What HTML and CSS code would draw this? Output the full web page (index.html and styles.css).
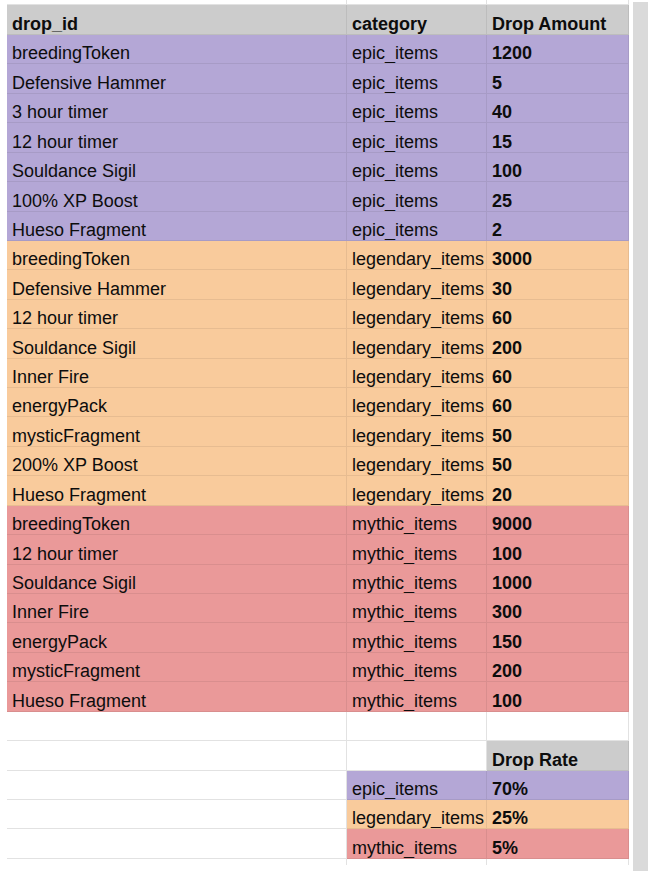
FILE: index.html
```html
<!DOCTYPE html>
<html>
<head>
<meta charset="utf-8">
<link rel="stylesheet" href="styles.css">
</head>
<body>
<div class="page">
  <div class="sheet">
    <div class="row stub"><div class="c"></div><div class="c"></div><div class="c"></div></div>
    <div class="row head"><div class="c">drop_id</div><div class="c">category</div><div class="c">Drop Amount</div></div>

    <div class="row epic"><div class="c">breedingToken</div><div class="c">epic_items</div><div class="c b">1200</div></div>
    <div class="row epic"><div class="c">Defensive Hammer</div><div class="c">epic_items</div><div class="c b">5</div></div>
    <div class="row epic"><div class="c">3 hour timer</div><div class="c">epic_items</div><div class="c b">40</div></div>
    <div class="row epic"><div class="c">12 hour timer</div><div class="c">epic_items</div><div class="c b">15</div></div>
    <div class="row epic"><div class="c">Souldance Sigil</div><div class="c">epic_items</div><div class="c b">100</div></div>
    <div class="row epic"><div class="c">100% XP Boost</div><div class="c">epic_items</div><div class="c b">25</div></div>
    <div class="row epic"><div class="c">Hueso Fragment</div><div class="c">epic_items</div><div class="c b">2</div></div>

    <div class="row leg"><div class="c">breedingToken</div><div class="c">legendary_items</div><div class="c b">3000</div></div>
    <div class="row leg"><div class="c">Defensive Hammer</div><div class="c">legendary_items</div><div class="c b">30</div></div>
    <div class="row leg"><div class="c">12 hour timer</div><div class="c">legendary_items</div><div class="c b">60</div></div>
    <div class="row leg"><div class="c">Souldance Sigil</div><div class="c">legendary_items</div><div class="c b">200</div></div>
    <div class="row leg"><div class="c">Inner Fire</div><div class="c">legendary_items</div><div class="c b">60</div></div>
    <div class="row leg"><div class="c">energyPack</div><div class="c">legendary_items</div><div class="c b">60</div></div>
    <div class="row leg"><div class="c">mysticFragment</div><div class="c">legendary_items</div><div class="c b">50</div></div>
    <div class="row leg"><div class="c">200% XP Boost</div><div class="c">legendary_items</div><div class="c b">50</div></div>
    <div class="row leg"><div class="c">Hueso Fragment</div><div class="c">legendary_items</div><div class="c b">20</div></div>

    <div class="row myth"><div class="c">breedingToken</div><div class="c">mythic_items</div><div class="c b">9000</div></div>
    <div class="row myth"><div class="c">12 hour timer</div><div class="c">mythic_items</div><div class="c b">100</div></div>
    <div class="row myth"><div class="c">Souldance Sigil</div><div class="c">mythic_items</div><div class="c b">1000</div></div>
    <div class="row myth"><div class="c">Inner Fire</div><div class="c">mythic_items</div><div class="c b">300</div></div>
    <div class="row myth"><div class="c">energyPack</div><div class="c">mythic_items</div><div class="c b">150</div></div>
    <div class="row myth"><div class="c">mysticFragment</div><div class="c">mythic_items</div><div class="c b">200</div></div>
    <div class="row myth"><div class="c">Hueso Fragment</div><div class="c">mythic_items</div><div class="c b">100</div></div>

    <div class="row blank"><div class="c"></div><div class="c"></div><div class="c"></div></div>
    <div class="row blank"><div class="c"></div><div class="c"></div><div class="c hd">Drop Rate</div></div>
    <div class="row blank"><div class="c"></div><div class="c epic-c">epic_items</div><div class="c epic-c b">70%</div></div>
    <div class="row blank"><div class="c"></div><div class="c leg-c">legendary_items</div><div class="c leg-c b">25%</div></div>
    <div class="row blank"><div class="c"></div><div class="c myth-c">mythic_items</div><div class="c myth-c b">5%</div></div>
    <div class="row tail"><div class="c"></div><div class="c"></div><div class="c"></div></div>
  </div>
  <div class="scroll"></div>
</div>
</body>
</html>
```

FILE: styles.css
```css
* { box-sizing: border-box; }
html, body { margin: 0; padding: 0; background: #ffffff; }
body {
  font-family: "Liberation Sans", Arial, sans-serif;
  font-size: 18px;
  color: #0d0d0d;
}
.page {
  display: flex;
  align-items: flex-start;
  width: 648px;
  height: 882px;
}
.sheet {
  margin-left: 7px;
  width: 622px;
  display: flex;
  flex-direction: column;
}
.scroll {
  margin-left: 4px;
  margin-top: 2px;
  width: 15px;
  height: 869px;
  background: #dadada;
}
.row {
  display: grid;
  grid-template-columns: 340px 140px 142px;
  height: 29.43px;
}
.c {
  display: flex;
  align-items: flex-end;
  padding: 0 0 0 5px;
  line-height: 20px;
  white-space: nowrap;
  overflow: hidden;
  border-right: 1px solid rgba(0, 0, 0, 0.07);
  border-bottom: 1px solid rgba(0, 0, 0, 0.07);
}
.b { font-weight: bold; }
.stub { height: 5px; }
.stub .c { border-color: #e2e2e2; }
.tail { height: 6px; }
.tail .c { border-bottom: none; border-right-color: #e2e2e2; }
.head { height: 30px; }
.head .c { background: #cccccc; font-weight: bold; }
.epic .c, .epic-c { background: #b4a7d6; }
.leg .c, .leg-c { background: #f9cb9c; }
.myth .c, .myth-c { background: #ea9999; }
.blank .c { border-color: #e2e2e2; }
.blank .c.hd { background: #cccccc; font-weight: bold; border-color: rgba(0,0,0,0.07); }
.blank .c.epic-c, .blank .c.leg-c, .blank .c.myth-c { border-color: rgba(0, 0, 0, 0.07); }
```
